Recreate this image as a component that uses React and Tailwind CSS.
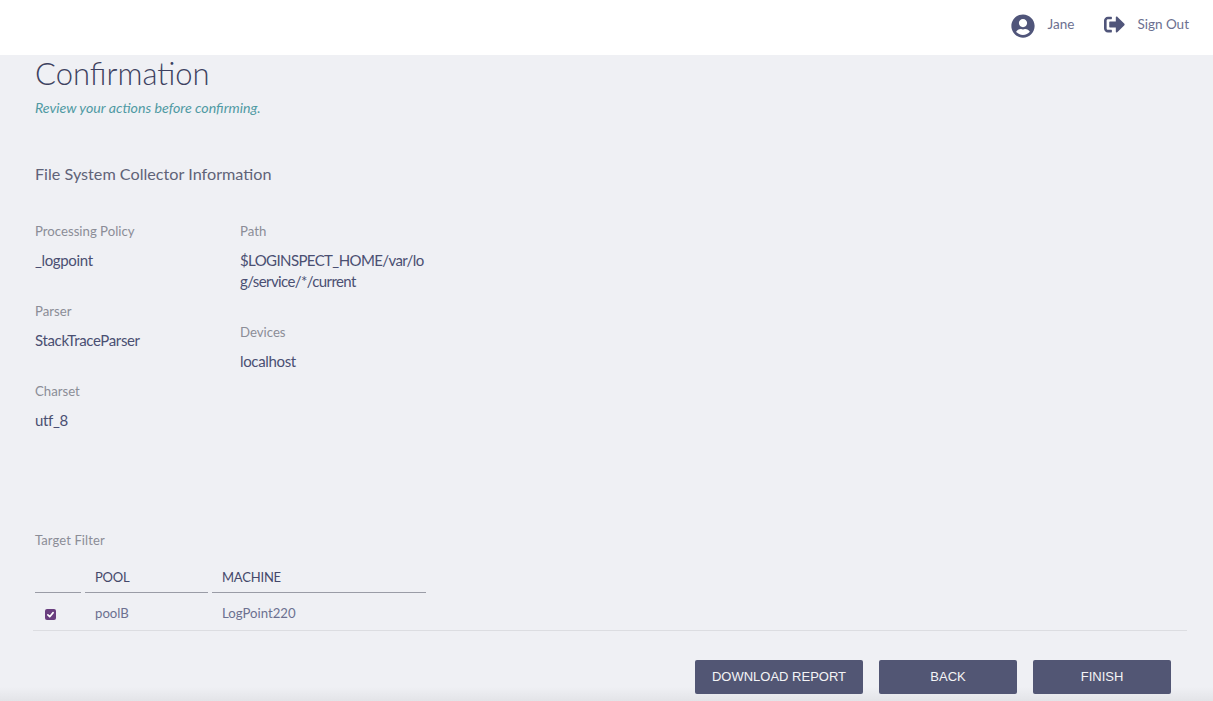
import React from "react";
import { FaUserCircle, FaSignOutAlt } from "react-icons/fa";

const font = "font-['Lato','Noto_Sans',sans-serif]";

function Field({ label, children, className = "", valueClass = "tracking-[-0.35px]" }) {
  return (
    <div className={className}>
      <div className="text-[13.2px] leading-[20px] text-[#8b8d97]">{label}</div>
      <div className={`mt-[9px] text-[15px] leading-[21px] text-[#4a4f72] ${valueClass}`}>{children}</div>
    </div>
  );
}

export default function App() {
  return (
    <div className={`${font} h-[701px] w-[1213px] overflow-hidden bg-[#eff0f4] flex flex-col`}>
      <header className="h-[55px] shrink-0 bg-white flex items-center justify-end pr-[24px] pb-[7px] text-[13.5px] text-[#6c7090]">
        <FaUserCircle className="text-[#50557a] w-[24px] h-[24px] mt-[3px]" />
        <span className="ml-[13px]">Jane</span>
        <FaSignOutAlt className="ml-[30px] text-[#50557a] w-[21px] h-[21px]" />
        <span className="ml-[12px]">Sign Out</span>
      </header>
      <main className="flex-1 flex flex-col pl-[35px] pr-[26px] relative">
        <div className="absolute left-0 right-0 bottom-0 h-[14px] bg-gradient-to-b from-transparent to-[#e3e4e8] pointer-events-none" />
        <h1 className="text-[31px] leading-[38px] font-light text-[#3d4160] -mt-[1px]">Confirmation</h1>
        <p className="mt-[6px] text-[14.2px] leading-[20px] italic text-[#4f9aa3]">Review your actions before confirming.</p>
        <h2 className="mt-[44px] text-[16.2px] leading-[24px] text-[#5f6378]">File System Collector Information</h2>
        <div className="mt-[35px] flex h-[280px]">
          <div className="w-[205px]">
            <Field label="Processing Policy" className="h-[80px]">_logpoint</Field>
            <Field label="Parser" className="h-[80px]">StackTraceParser</Field>
            <Field label="Charset">utf_8</Field>
          </div>
          <div className="w-[190px]">
            <Field label="Path" className="h-[101px]" valueClass="tracking-[-0.6px]">$LOGINSPECT_HOME/var/lo<br />g/service/*/current</Field>
            <Field label="Devices">localhost</Field>
          </div>
        </div>
        <div className="text-[13px] tracking-[0.1px] leading-[20px] text-[#8b8d97] mt-[29px]">Target Filter</div>
        <div className="mt-[17px] flex text-[13px] tracking-[-0.2px] leading-[20px] text-[#44486a]">
          <div className="w-[46px] h-[26px] border-b border-[#9a9ca6]" />
          <div className="ml-[4px] w-[123px] h-[26px] pl-[10px] border-b border-[#9a9ca6]">POOL</div>
          <div className="ml-[4px] w-[214px] h-[26px] pl-[10px] border-b border-[#9a9ca6]">MACHINE</div>
        </div>
        <div className="-ml-[2px] h-[38px] flex items-center border-b border-[#dcdde1] text-[13.2px] text-[#6c7090]">
          <div className="w-[62px] pl-[12px] flex items-center">
            <span className="w-[11px] h-[11px] rounded-[2px] bg-[#6a3f7f] flex items-center justify-center mt-[5px]">
              <svg viewBox="0 0 12 12" className="w-[9px] h-[9px]" fill="none" stroke="white" strokeWidth="2.2" strokeLinecap="round" strokeLinejoin="round"><path d="M2.5 6.5 5 9l4.5-5.5" /></svg>
            </span>
          </div>
          <div className="w-[127px] pt-[4px]">poolB</div>
          <div className="pt-[4px]">LogPoint220</div>
        </div>
        <div className="relative mt-[29px] flex justify-end gap-[16px] pr-[16px]">
          {[["DOWNLOAD REPORT", "w-[168px]"], ["BACK", "w-[138px]"], ["FINISH", "w-[138px]"]].map(([t, w]) => (
            <button key={t} className={`${w} h-[34px] rounded-[2px] bg-[#525674] text-[#f4f4f6] text-[13px] font-['Liberation_Sans',sans-serif]`}>{t}</button>
          ))}
        </div>
      </main>
    </div>
  );
}
